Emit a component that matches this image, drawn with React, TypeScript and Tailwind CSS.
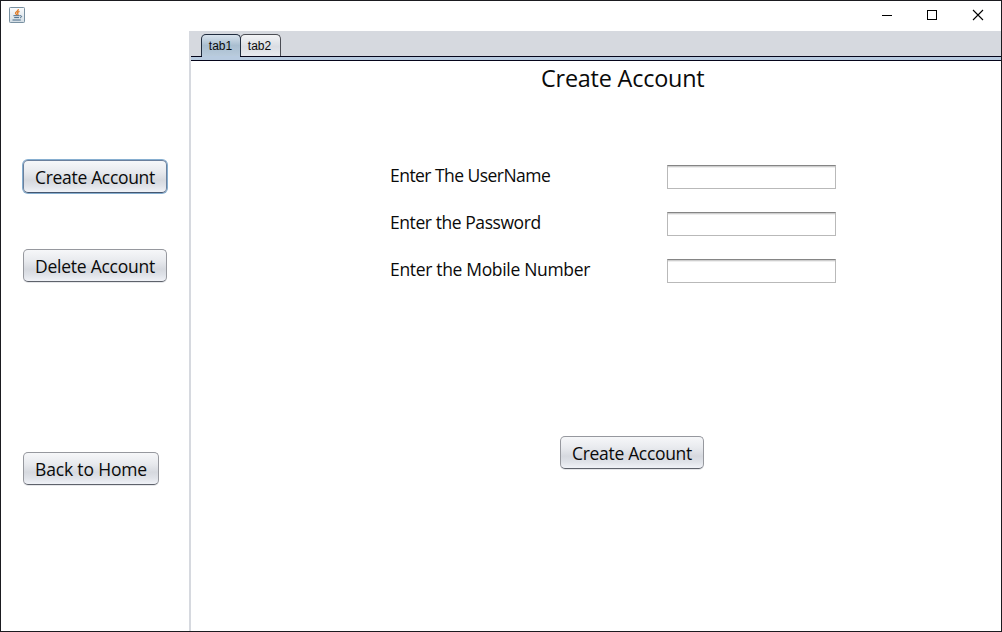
import React from "react";

type ButtonProps = { label: string; width: string; spacing: string; focused?: boolean };

function NimbusButton({ label, width, spacing, focused }: ButtonProps) {
  const edge = focused
    ? "border-[#6a7f9c] border-b-[#45566f] shadow-[0_0_0_1px_#86aed0]"
    : "border-[#96989e] border-b-[#5e626b] shadow-[0_1px_0_#e6e7ea]";
  return (
    <button
      type="button"
      className={`block h-[33px] shrink-0 rounded-[5px] border bg-[linear-gradient(to_bottom,#f6f7f9_0%,#e8eaee_35%,#d6d9df_62%,#dfe2e8_80%,#f0f2f7_100%)] p-0 text-center text-[17.5px] leading-[33px] whitespace-nowrap text-[#0a0a0a] outline-none ${width} ${edge}`}
    >
      <span className={spacing}>{label}</span>
    </button>
  );
}

const fields = [
  { label: "Enter The UserName", spacing: "tracking-[-0.54px]" },
  { label: "Enter the Password", spacing: "tracking-[-0.43px]" },
  { label: "Enter the Mobile Number", spacing: "tracking-[-0.33px]" },
];

function JavaIcon() {
  return (
    <svg width="16" height="16" viewBox="0 0 16 16" fill="none">
      <defs>
        <linearGradient id="iconBack" x1="0" y1="0" x2="0" y2="1">
          <stop offset="0" stopColor="#fbfcfd" />
          <stop offset="1" stopColor="#d3dde4" />
        </linearGradient>
      </defs>
      <rect x="0.5" y="0.5" width="15" height="15" rx="0.8" fill="url(#iconBack)" stroke="#7890a1" />
      <path d="M9.3 2.1C9.8 4 6.2 4.7 6.5 6.2c.1.7 1 1.2 1.1 1.8M10.5 4.4C8.3 5.2 8.2 6 8.8 6.7c.4.5.2 1-.4 1.3" stroke="#e07c28" strokeWidth="1.3" />
      <path d="M4.4 8.7h6.2M5.2 10.6h4.9M3.5 13h8.3M10.8 8.8c2.4-.6 2.4 1.6.2 2" stroke="#496b88" strokeWidth="1" />
    </svg>
  );
}

export default function App() {
  return (
    <div className="flex h-[632px] w-[1002px] flex-col overflow-hidden border border-[#1b1b20] bg-white font-['Open_Sans','Noto_Sans',sans-serif] text-[#0a0a0a]">
      <header className="flex h-[30px] shrink-0 items-start justify-between">
        <div className="pt-[6px] pl-2">
          <JavaIcon />
        </div>
        <svg width="120" height="29" viewBox="0 0 120 29" fill="none" stroke="#000" shapeRendering="crispEdges">
          <path d="M1 14.5h10" />
          <rect x="46.5" y="9.5" width="9" height="9" />
          <path d="M92 9l10 10M102 9L92 19" shapeRendering="auto" strokeWidth="1.1" />
        </svg>
      </header>
      <div className="flex min-h-0 flex-1">
        <aside className="flex w-[190px] shrink-0 flex-col border-r-2 border-[#d6d9df] pt-[129px] pl-[22px]">
          <NimbusButton label="Create Account" width="w-[144px]" spacing="tracking-[-0.32px]" focused />
          <div className="mt-14">
            <NimbusButton label="Delete Account" width="w-[144px]" spacing="tracking-[-0.25px]" />
          </div>
          <div className="mt-[170px]">
            <NimbusButton label="Back to Home" width="w-[136px]" spacing="tracking-[-0.16px]" />
          </div>
        </aside>
        <main className="flex flex-1 flex-col">
          <nav className="flex h-[25px] shrink-0 items-end bg-[#d6d9df] pl-[10px] font-['Liberation_Sans',sans-serif] text-[12px]">
            <div className="z-10 h-[22px] w-10 rounded-t-[5px] border border-b-0 border-[#202c3e] bg-[linear-gradient(to_bottom,#d8e3ed,#a9bed0_50%,#b9cbdc)] pr-px text-center leading-[22px]">tab1</div>
            <div className="-ml-px h-[22px] w-[41px] rounded-t-[5px] border border-b-0 border-[#4b4d54] bg-[linear-gradient(to_bottom,#f3f4f6,#dadde3_55%,#e8eaef)] pr-0.5 text-center leading-[22px]">tab2</div>
          </nav>
          <div className="flex h-[5px] shrink-0 border-y border-[#05051a] bg-[#b8cbe0]">
            <div className="-mt-px ml-[11px] h-px w-[38px] bg-[#b8cbe0]" />
          </div>
          <section className="flex flex-1 flex-col">
            <h1 className="mt-[2px] ml-[350px] h-[30px] text-[23.4px] leading-[30px] tracking-[-0.2px] whitespace-nowrap">Create Account</h1>
            <form className="mt-[71px] ml-[199px] flex w-[446px] flex-col">
              {fields.map((field) => (
                <label key={field.label} className="flex h-[47px] items-start justify-between text-[17.5px] leading-[22px] whitespace-nowrap">
                  <span className={field.spacing}>{field.label}</span>
                  <input
                    type="text"
                    className="mt-[1px] h-6 w-[169px] border border-[#b9b9b9] border-t-[#858585] bg-white px-1 shadow-[inset_0_1px_0_#cecece,inset_0_2px_0_#eeeeee] outline-none"
                  />
                </label>
              ))}
            </form>
            <div className="mt-[131px] ml-[369px]">
              <NimbusButton label="Create Account" width="w-[144px]" spacing="tracking-[-0.32px]" />
            </div>
          </section>
        </main>
      </div>
    </div>
  );
}
